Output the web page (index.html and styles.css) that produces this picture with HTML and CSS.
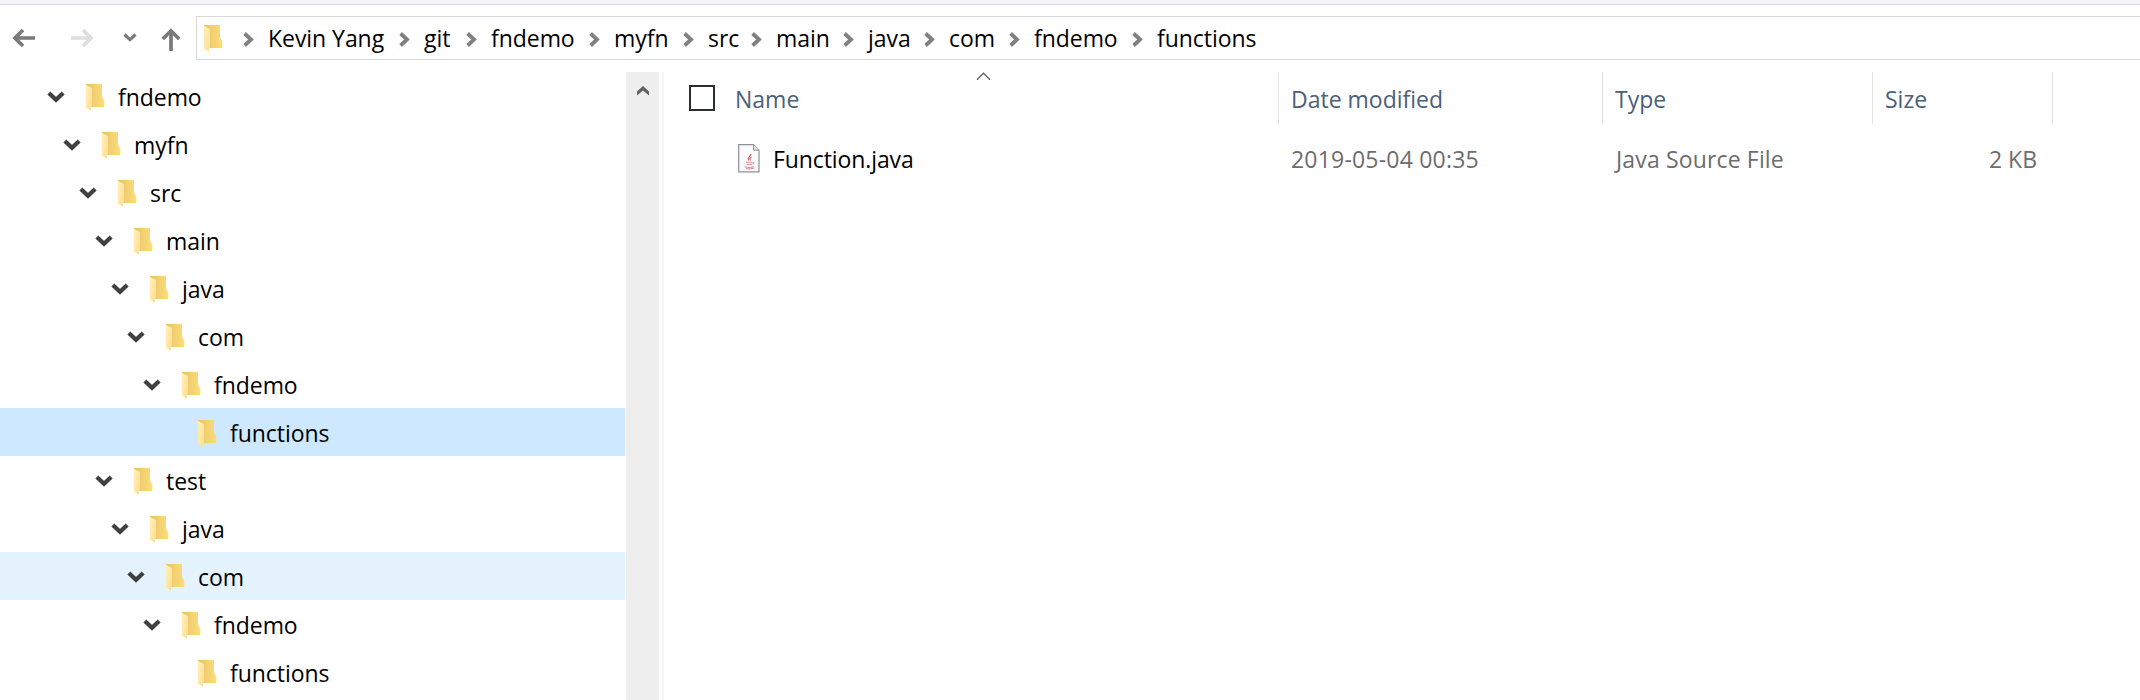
FILE: index.html
```
<!DOCTYPE html>
<html lang="en">
<head>
<meta charset="utf-8">
<title>functions</title>
<link rel="stylesheet" href="styles.css">
</head>
<body>
<svg class="defs" width="0" height="0" aria-hidden="true">
  <defs>
    <linearGradient id="fold" x1="0" x2="1"><stop offset="0" stop-color="#e8c263"/><stop offset=".5" stop-color="#f3d070"/><stop offset="1" stop-color="#fcdc7c"/></linearGradient>
    <linearGradient id="flap" x1="0" x2="1" y1="0" y2="1"><stop offset="0" stop-color="#ffefb4"/><stop offset="1" stop-color="#fbe192"/></linearGradient>
  </defs>
  <symbol id="folder" viewBox="0 0 19 28">
    <path d="M0 0H16V13L18.3 16V23H5L0 21Z" fill="url(#fold)"/>
    <path d="M0 .8L6 4V22.5L5 23V27L0 23.5Z" fill="url(#flap)"/>
  </symbol>
  <symbol id="down" viewBox="0 0 18 12"><path d="M1.8 2L9 8.8L16.2 2" fill="none" stroke="#404040" stroke-width="4.2"/></symbol>
  <symbol id="right" viewBox="0 0 11 15"><path d="M1.6 1.5L8 7.5L1.6 13.5" fill="none" stroke="#808080" stroke-width="3.8"/></symbol>
</svg>
<div class="ribbon"></div>
<header class="nav">
  <svg class="back" width="24" height="20" viewBox="0 0 24 20"><path d="M23 10H3M11 2L3 10L11 18" fill="none" stroke="#7a7a7a" stroke-width="3.7"/></svg>
  <svg class="forward" width="24" height="20" viewBox="0 0 24 20"><path d="M1 10H21M13 2L21 10L13 18" fill="none" stroke="#dedede" stroke-width="3.7"/></svg>
  <svg class="recent" width="14" height="10" viewBox="0 0 14 10"><path d="M1.5 1.5L7 6.6L12.5 1.5" fill="none" stroke="#7a7a7a" stroke-width="3.2"/></svg>
  <svg class="up" width="20" height="24" viewBox="0 0 20 24"><path d="M10 23V3M1.8 11L10 2.8L18.2 11" fill="none" stroke="#7a7a7a" stroke-width="3.7"/></svg>
  <div class="address">
    <svg class="folder"><use href="#folder"/></svg>
    <div class="crumbs">
      <span class="crumb"><svg><use href="#right"/></svg>Kevin Yang</span>
      <span class="crumb"><svg><use href="#right"/></svg>git</span>
      <span class="crumb"><svg><use href="#right"/></svg>fndemo</span>
      <span class="crumb"><svg><use href="#right"/></svg>myfn</span>
      <span class="crumb"><svg><use href="#right"/></svg>src</span>
      <span class="crumb"><svg><use href="#right"/></svg>main</span>
      <span class="crumb"><svg><use href="#right"/></svg>java</span>
      <span class="crumb"><svg><use href="#right"/></svg>com</span>
      <span class="crumb"><svg><use href="#right"/></svg>fndemo</span>
      <span class="crumb"><svg><use href="#right"/></svg>functions</span>
    </div>
  </div>
</header>
<main class="body">
  <nav class="tree">
    <div class="node l0"><svg class="tw"><use href="#down"/></svg><svg class="folder"><use href="#folder"/></svg><span>fndemo</span></div>
    <div class="node l1"><svg class="tw"><use href="#down"/></svg><svg class="folder"><use href="#folder"/></svg><span>myfn</span></div>
    <div class="node l2"><svg class="tw"><use href="#down"/></svg><svg class="folder"><use href="#folder"/></svg><span>src</span></div>
    <div class="node l3"><svg class="tw"><use href="#down"/></svg><svg class="folder"><use href="#folder"/></svg><span>main</span></div>
    <div class="node l4"><svg class="tw"><use href="#down"/></svg><svg class="folder"><use href="#folder"/></svg><span>java</span></div>
    <div class="node l5"><svg class="tw"><use href="#down"/></svg><svg class="folder"><use href="#folder"/></svg><span>com</span></div>
    <div class="node l6"><svg class="tw"><use href="#down"/></svg><svg class="folder"><use href="#folder"/></svg><span>fndemo</span></div>
    <div class="node l7 selected"><svg class="tw"></svg><svg class="folder"><use href="#folder"/></svg><span>functions</span></div>
    <div class="node l3"><svg class="tw"><use href="#down"/></svg><svg class="folder"><use href="#folder"/></svg><span>test</span></div>
    <div class="node l4"><svg class="tw"><use href="#down"/></svg><svg class="folder"><use href="#folder"/></svg><span>java</span></div>
    <div class="node l5 hover"><svg class="tw"><use href="#down"/></svg><svg class="folder"><use href="#folder"/></svg><span>com</span></div>
    <div class="node l6"><svg class="tw"><use href="#down"/></svg><svg class="folder"><use href="#folder"/></svg><span>fndemo</span></div>
    <div class="node l7"><svg class="tw"></svg><svg class="folder"><use href="#folder"/></svg><span>functions</span></div>
  </nav>
  <div class="scrollbar"><svg width="13" height="10" viewBox="0 0 13 10"><path d="M0 5.5L6 0L12 5.5V9.5L6 4.5L0 9.5Z" fill="#606060"/></svg></div>
  <div class="splitter"></div>
  <section class="files">
    <div class="row head">
      <div class="cell name"><span class="check"></span><span>Name</span>
        <svg class="sort" width="15" height="9" viewBox="0 0 15 9"><path d="M1 7.7L7.5 1.2L14 7.7" fill="none" stroke="#606060" stroke-width="1.3"/></svg>
      </div>
      <div class="cell">Date modified</div>
      <div class="cell">Type</div>
      <div class="cell">Size</div>
    </div>
    <div class="row file">
      <div class="cell name">
        <svg class="doc" width="22" height="29" viewBox="0 0 22 29">
          <path d="M.7 .7H15.5L21 6.2V27.8H.7Z" fill="#f9fafc" stroke="#8e9194" stroke-width="1.2"/>
          <path d="M15.5 .7V6.2H21" fill="#e4e6e8" stroke="#8e9194"/>
          <path d="M13 10C13 12.500 9 12.500 10.500 16.500M13.500 13C11.500 14 11.500 15 12.500 16.500" fill="none" stroke="#d9696d" stroke-width="1.2"/>
          <path d="M8 18.300H14M8.500 20.500H14M14.500 18.500Q17.500 18.500 15 20.500M6.500 22.700Q11 24.500 16 22.700M8 24.700Q12 25.500 16.500 24" fill="none" stroke="#e08a8d" stroke-width="1"/>
        </svg><span>Function.java</span></div>
      <div class="cell date">2019-05-04 00:35</div>
      <div class="cell type">Java Source File</div>
      <div class="cell size">2 KB</div>
    </div>
  </section>
</main>
</body>
</html>
```
FILE: styles.css
```
* { box-sizing: border-box; }
body {
  margin: 0;
  height: 700px;
  overflow: hidden;
  background: #fff;
  color: #000;
  font: 23px/32px "Open Sans", "Noto Sans", sans-serif;
  white-space: nowrap;
}
svg { display: block; flex: none; }
.defs { position: absolute; }
.ribbon { height: 5px; background: #f3f4f6; border-bottom: 1px solid #d5d7d9; }
.nav { display: flex; align-items: center; height: 67px; padding: 0 0 1px 12px; }
.forward { margin-left: 34px; }
.recent { margin-left: 29px; }
.up { margin: 3px 0 0 24px; }
.address {
  display: flex;
  align-items: center;
  flex: 1;
  height: 44px;
  margin-left: 15px;
  padding-left: 7px;
  border: 1px solid #d9d9d9;
  border-right: 0;
}
.folder { width: 19px; height: 28px; }
.address .folder { margin-top: 2px; }
.crumbs {
  display: grid;
  grid-template-columns: 156px 67px 123px 94px 68px 92px 81px 85px 123px 140px;
  margin-left: 20px;
}
.crumb { display: flex; align-items: center; gap: 14px; letter-spacing: -0.05px; }
.crumb svg { width: 11px; height: 15px; margin-top: 2px; }
.body { display: flex; height: 628px; }
.tree { width: 625px; overflow: hidden; }
.node { display: flex; align-items: center; height: 48px; padding-left: 47px; letter-spacing: -0.05px; }
.node span { padding-top: 2px; }
.node .tw { width: 18px; height: 12px; margin-top: 2px; }
.node .folder { margin: 3px 13px 0 21px; }
.l1 { padding-left: 63px; }
.l2 { padding-left: 79px; }
.l3 { padding-left: 95px; }
.l4 { padding-left: 111px; }
.l5 { padding-left: 127px; }
.l6 { padding-left: 143px; }
.l7 { padding-left: 159px; }
.selected { background: #cde8ff; }
.hover { background: #e5f3ff; }
.scrollbar { width: 33px; margin-left: 1px; padding: 14px 0 0 11px; background: #eee; }
.splitter { width: 2px; margin-left: 3px; background: #f5f5f5; }
.files { flex: 1; padding-left: 15px; }
.row { display: grid; grid-template-columns: 600px 324px 270px 180px; }
.cell { display: flex; align-items: center; padding-left: 12px; }
.head { height: 52px; color: #4c607a; }
.head .cell { position: relative; padding-top: 2px; border-right: 1px solid #e2e2e2; }
.head .name { padding-left: 10px; }
.check { width: 26px; height: 26px; margin: 0 20px 2px 0; border: 2px solid #2b2f33; }
.sort { position: absolute; left: 297px; top: 0; }
.file { height: 68px; color: #6d6d6d; }
.file .cell { padding-top: 2px; }
.file .name { padding-left: 59px; color: #000; letter-spacing: -0.1px; }
.doc { margin: 0 13px 2px 0; }
.date { letter-spacing: 0.2px; }
.file .type { padding-left: 13px; letter-spacing: 0.15px; }
.file .size { justify-content: flex-end; padding: 2px 16px 0 0; }
```
